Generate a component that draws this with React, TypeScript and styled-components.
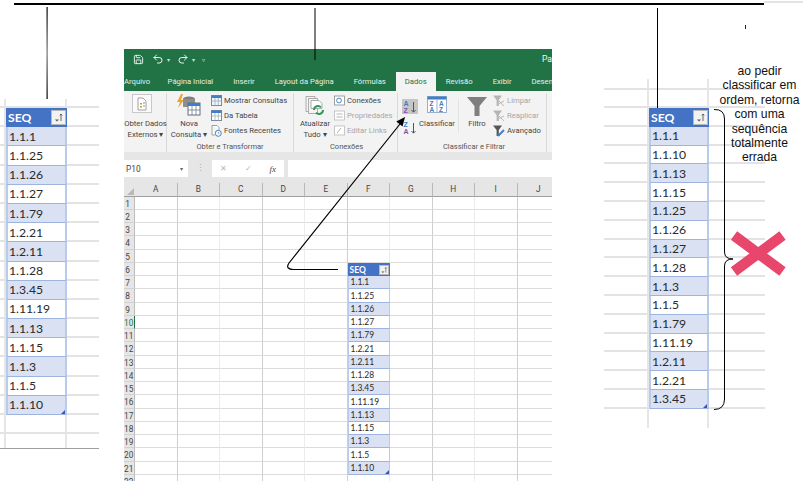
import React from 'react';
import styled, { createGlobalStyle } from 'styled-components';
import { Redo2, Save, Undo2 } from 'lucide-react';

const LEFT_ROWS = ['1.1.1', '1.1.25', '1.1.26', '1.1.27', '1.1.79', '1.2.21', '1.2.11', '1.1.28', '1.3.45', '1.11.19', '1.1.13', '1.1.15', '1.1.3', '1.1.5', '1.1.10'];
const RIGHT_ROWS = ['1.1.1', '1.1.10', '1.1.13', '1.1.15', '1.1.25', '1.1.26', '1.1.27', '1.1.28', '1.1.3', '1.1.5', '1.1.79', '1.11.19', '1.2.11', '1.2.21', '1.3.45'];
const COLUMNS = ['A', 'B', 'C', 'D', 'E', 'F', 'G', 'H', 'I', 'J'];
const TABS = ['Arquivo', 'Página Inicial', 'Inserir', 'Layout da Página', 'Fórmulas', 'Dados', 'Revisão', 'Exibir', 'Desen'];
const NOTE = ['ao pedir', 'classificar em', 'ordem, retorna', 'com uma', 'sequência', 'totalmente', 'errada'];

const FilterGlyph = ({ size = 11 }: { size?: number }) => (
    <svg width={size} height={size} viewBox="0 0 11 11">
        <path d="M2 7.5h4L4 9.5z" fill="#555" />
        <path d="M8 9V2M6.8 3.4 8 2l1.2 1.4" stroke="#555" strokeWidth="0.9" fill="none" />
    </svg>
);

const TableIcon = ({ fill = '#fff' }: { fill?: string }) => (
    <svg width="11" height="11" viewBox="0 0 11 11">
        <rect x="0.5" y="0.5" width="10" height="10" fill={fill} stroke="#7a8a9a" />
        <rect x="0.5" y="0.5" width="10" height="2.5" fill="#3f7fc4" />
        <path d="M4 3v7.5M7.3 3v7.5M.5 6h10" stroke="#9aa7b3" strokeWidth="0.7" />
    </svg>
);

const RecentIcon = () => (
    <svg width="11" height="12" viewBox="0 0 11 12">
        <path d="M1 .5h5l2 2V5M1 .5V10h3" fill="#fff" stroke="#8a8a8a" strokeWidth="0.8" />
        <circle cx="7.3" cy="8.3" r="3" fill="#fff" stroke="#3f7fc4" />
        <path d="M7.3 6.8v1.6h1.3" stroke="#3f7fc4" strokeWidth="0.7" fill="none" />
    </svg>
);

const ExternalDataIcon = () => (
    <svg width="20" height="19" viewBox="0 0 20 19">
        <rect x="0.5" y="0.5" width="19" height="18" fill="#fafafa" stroke="#c8c8c8" />
        <path d="M6 4h5l3 3v9H6z" fill="#fff" stroke="#8a8a8a" strokeWidth="0.8" />
        <path d="M8 9h2v1.5H8zM8 12h2v1.5H8z" fill="#c9a04a" />
        <path d="M11 9h2M11 12h2" stroke="#999" />
    </svg>
);

const NewQueryIcon = () => (
    <svg width="24" height="22" viewBox="0 0 24 22">
        <path d="M4 0 0 8h3l-2 6 6-8H4l2-6z" fill="#e8a33a" />
        <ellipse cx="12" cy="5" rx="6" ry="2.4" fill="#7d7d7d" />
        <path d="M6 5v8h12V5" fill="#8f8f8f" />
        <rect x="11" y="9" width="12" height="12" fill="#fff" stroke="#5f6f7f" />
        <rect x="11" y="9" width="12" height="3" fill="#3f7fc4" />
        <path d="M15 12v9M19 12v9M11 16h12" stroke="#5f6f7f" strokeWidth="0.7" />
    </svg>
);

const RefreshIcon = () => (
    <svg width="20" height="20" viewBox="0 0 20 20">
        <path d="M1 .5h9v15H1z" fill="#f4f4f4" stroke="#9a9a9a" strokeWidth="0.8" />
        <path d="M3.5 2.5h9v15h-9z" fill="#f4f4f4" stroke="#9a9a9a" strokeWidth="0.8" />
        <path d="M6 4.5h8l3 3v5H6z" fill="#fff" stroke="#9a9a9a" strokeWidth="0.8" />
        <path d="M9 14a4 4 0 0 1 7-2.6M18 14a4 4 0 0 1-7 2.6" stroke="#2f9a5c" strokeWidth="2" fill="none" />
    </svg>
);

const LinkIcon = ({ kind, muted }: { kind: string; muted?: boolean }) => {
    const ink = muted ? '#b5b5b5' : '#4a86c5';
    return (
        <svg width="11" height="11" viewBox="0 0 11 11">
            <rect x="0.5" y="1" width="10" height="9" fill="#fff" stroke={muted ? '#bbb' : '#8a8a8a'} strokeWidth="0.8" />
            {kind === 'link' && <circle cx="5" cy="5.5" r="2.4" fill="none" stroke={ink} />}
            {kind === 'props' && <path d="M2.5 4h6M2.5 7h6" stroke={ink} />}
            {kind === 'edit' && <path d="M3 8l4-5" stroke={ink} />}
        </svg>
    );
};

const SortIcon = ({ first, second }: { first: string; second: string }) => (
    <svg width="14" height="14" viewBox="0 0 14 14">
        <text x="0.5" y="6.3" fontFamily="Liberation Sans, sans-serif" fontSize="7" fontWeight="700" fill="#3f7fc4">{first}</text>
        <text x="0.5" y="13.3" fontFamily="Liberation Sans, sans-serif" fontSize="7" fontWeight="700" fill="#8a4fb0">{second}</text>
        <path d="M10.5 2v10M8.5 10l2 2.2 2-2.2" stroke="#555" fill="none" />
    </svg>
);

const CustomSortIcon = () => (
    <svg width="20" height="17" viewBox="0 0 20 17">
        <rect x="0.5" y="0.5" width="19" height="16" fill="#fff" stroke="#9ab0c8" />
        <rect x="0.5" y="0.5" width="19" height="3" fill="#3f7fc4" />
        <path d="M10 3.5v13" stroke="#9ab0c8" />
        <text x="2.5" y="10" fontFamily="Liberation Sans, sans-serif" fontSize="6.5" fontWeight="700" fill="#8a4fb0">Z</text>
        <text x="2.5" y="16" fontFamily="Liberation Sans, sans-serif" fontSize="6.5" fontWeight="700" fill="#3f7fc4">A</text>
        <text x="12" y="10" fontFamily="Liberation Sans, sans-serif" fontSize="6.5" fontWeight="700" fill="#3f7fc4">A</text>
        <text x="12" y="16" fontFamily="Liberation Sans, sans-serif" fontSize="6.5" fontWeight="700" fill="#8a4fb0">Z</text>
    </svg>
);

const FunnelIcon = () => (
    <svg width="20" height="19" viewBox="0 0 20 19">
        <path d="M0 0h20l-7.5 9v10h-5V9z" fill="#7f7f7f" />
    </svg>
);

const SmallFunnel = ({ color, badge }: { color: string; badge: string }) => (
    <svg width="12" height="12" viewBox="0 0 12 12">
        <path d="M0 .5h9L5.8 5v6H3.6V5z" fill={color} />
        <path d="M6 8.5 11 6M6 6l5 5" stroke={badge} strokeWidth="1" />
    </svg>
);

const AdvancedFunnel = () => (
    <svg width="12" height="12" viewBox="0 0 12 12">
        <path d="M0 .5h9L5.8 5v6H3.6V5z" fill="#555" />
        <path d="M5 11l6-6" stroke="#3f7fc4" strokeWidth="2" />
    </svg>
);

const Annotations = () => (
    <Overlay width="803" height="481" viewBox="0 0 803 481">
        <defs>
            <linearGradient id="fade" x1="0" y1="0" x2="0" y2="1">
                <stop offset="0" stopColor="#000" />
                <stop offset="0.5" stopColor="#777" />
                <stop offset="1" stopColor="#000" />
            </linearGradient>
        </defs>
        <line x1="14" y1="4" x2="764" y2="4" stroke="#000" strokeWidth="2" />
        <line x1="764" y1="2" x2="803" y2="2" stroke="#e4e4e4" strokeWidth="2" />
        <rect x="46.5" y="7" width="1.2" height="92" fill="url(#fade)" />
        <line x1="315" y1="8" x2="315" y2="60" stroke="#000" strokeWidth="1" />
        <line x1="657.5" y1="8" x2="657.5" y2="108" stroke="#000" strokeWidth="1" />
        <line x1="745.5" y1="25" x2="745.5" y2="29" stroke="#222" strokeWidth="1" />
        <path d="M338 269.5H293Q285 269 289 263L400 124" fill="none" stroke="#000" strokeWidth="1.2" />
        <polygon points="405,117 402.5,126.5 396.3,121.5" fill="#000" />
        <path d="M714 109.5Q724.5 109 724.5 119V252Q724.5 259 733 259Q724.5 259 724.5 266V399Q724.5 409.5 714 409.5" fill="none" stroke="#000" strokeWidth="1" />
        <path d="M734 235.5 782.5 271.5M782.5 235.5 734 271.5" stroke="#e8466b" strokeWidth="10.5" />
    </Overlay>
);

type SeqSheetProps = {
    rows: string[];
    columns: string;
    template: string;
    before: number;
    after: number;
    closed?: boolean;
    left: number;
    top: number;
};

const SeqSheet: React.FC<SeqSheetProps> = ({ rows, columns, template, before, after, closed, left, top }) => {
    const blank = (key: string, bare: boolean) => (
        <React.Fragment key={key}>
            <GridCell $bare={bare} />
            <GridCell $bare={bare} />
            <GridCell $bare={bare} />
        </React.Fragment>
    );
    return (
        <SheetClip $left={left} $top={top} $columns={columns} $template={template} $closed={closed}>
            {Array.from({ length: before }, (_, i) => blank(`b${i}`, false))}
            <GridCell />
            <HeadCell $size={12.2}>SEQ<FilterButton $size={15}><FilterGlyph /></FilterButton></HeadCell>
            <GridCell />
            {rows.map((value, i) => (
                <React.Fragment key={value}>
                    <GridCell />
                    <DataCell $band={i % 2 === 0} $size={12.2} $edge={2}>
                        {value}
                        {i === rows.length - 1 && <ResizeHandle />}
                    </DataCell>
                    <GridCell />
                </React.Fragment>
            ))}
            {Array.from({ length: after }, (_, i) => blank(`a${i}`, !closed || i === after - 1))}
        </SheetClip>
    );
};

const App: React.FC = () => {
    return (
        <Canvas>
            <GlobalStyle />
            <SeqSheet
                rows={LEFT_ROWS}
                columns="6px 61px 32px"
                template="9px repeat(16, 19.19px) 19px 14px"
                before={1}
                after={2}
                closed
                left={0}
                top={99}
            />
            <ExcelWindow>
                <TitleBar>
                    <SaveSlot><Save size={11} strokeWidth={2} /></SaveSlot>
                    <Undo2 size={12} strokeWidth={2} />
                    <Caret>▾</Caret>
                    <Redo2 size={12} strokeWidth={2} />
                    <Caret>▾</Caret>
                    <Caret>▿</Caret>
                    <TitleText>Pa</TitleText>
                </TitleBar>
                <TabStrip>
                    {TABS.map((tab) => (
                        <Tab key={tab} $active={tab === 'Dados'}>{tab}</Tab>
                    ))}
                </TabStrip>
                <Ribbon>
                    <Group $width={43} $pad={0}>
                        <GroupBody>
                            <LargeButton $width={43}>
                                <IconSlot $lift={3} $shift={-8}><ExternalDataIcon /></IconSlot>
                                <span>Obter Dados</span>
                                <span>Externos ▾</span>
                            </LargeButton>
                        </GroupBody>
                        <GroupLabel />
                    </Group>
                    <Group $width={127} $pad={0}>
                        <GroupBody>
                            <LargeButton $width={44}>
                                <IconSlot><NewQueryIcon /></IconSlot>
                                <span>Nova</span>
                                <span>Consulta ▾</span>
                            </LargeButton>
                            <ActionList>
                                <Action><TableIcon fill="#eef4fa" />Mostrar Consultas</Action>
                                <Action><TableIcon />Da Tabela</Action>
                                <Action><RecentIcon />Fontes Recentes</Action>
                            </ActionList>
                        </GroupBody>
                        <GroupLabel>Obter e Transformar</GroupLabel>
                    </Group>
                    <Group $width={104} $pad={2}>
                        <GroupBody>
                            <LargeButton $width={38}>
                                <IconSlot><RefreshIcon /></IconSlot>
                                <span>Atualizar</span>
                                <span>Tudo ▾</span>
                            </LargeButton>
                            <ActionList>
                                <Action><LinkIcon kind="link" />Conexões</Action>
                                <Action $muted><LinkIcon kind="props" muted />Propriedades</Action>
                                <Action $muted><LinkIcon kind="edit" muted />Editar Links</Action>
                            </ActionList>
                        </GroupBody>
                        <GroupLabel>Conexões</GroupLabel>
                    </Group>
                    <Group $width={149} $pad={4}>
                        <GroupBody>
                            <SortColumn>
                                <SortButton $active><SortIcon first="A" second="Z" /></SortButton>
                                <SortButton><SortIcon first="Z" second="A" /></SortButton>
                            </SortColumn>
                            <LargeButton $width={38}>
                                <IconSlot $lift={3}><CustomSortIcon /></IconSlot>
                                <span>Classificar</span>
                            </LargeButton>
                            <FaintDivider />
                            <LargeButton $width={32}>
                                <IconSlot><FunnelIcon /></IconSlot>
                                <span>Filtro</span>
                            </LargeButton>
                            <ActionList>
                                <Action $muted><SmallFunnel color="#b5b5b5" badge="#c9b0a8" />Limpar</Action>
                                <Action $muted><SmallFunnel color="#b5b5b5" badge="#a9c4b4" />Reaplicar</Action>
                                <Action><AdvancedFunnel />Avançado</Action>
                            </ActionList>
                        </GroupBody>
                        <GroupLabel>Classificar e Filtrar</GroupLabel>
                    </Group>
                </Ribbon>
                <FormulaBar>
                    <NameBox>P10<Caret $dark>▾</Caret></NameBox>
                    <Grip>⋮</Grip>
                    <FormulaButtons>
                        <span>✕</span>
                        <span>✓</span>
                        <FxLabel>fx</FxLabel>
                    </FormulaButtons>
                    <FormulaInput />
                </FormulaBar>
                <Sheet>
                    <Corner />
                    {COLUMNS.map((col) => (
                        <ColumnHead key={col}>{col}</ColumnHead>
                    ))}
                    {Array.from({ length: 22 }, (_, r) => (
                        <React.Fragment key={r}>
                            <RowHead $selected={r === 9}>{r + 1}</RowHead>
                            {COLUMNS.map((col, c) => {
                                if (col === 'F' && r === 5) {
                                    return <HeadCell key={col} $size={8.5}>SEQ<FilterButton $size={10}><FilterGlyph size={8} /></FilterButton></HeadCell>;
                                }
                                if (col === 'F' && r > 5 && r < 21) {
                                    return (
                                        <DataCell key={col} $band={r % 2 === 0} $size={8.5} $edge={1}>
                                            {LEFT_ROWS[r - 6]}
                                            {r === 20 && <ResizeHandle />}
                                        </DataCell>
                                    );
                                }
                                return <SheetCell key={col} $strong={c % 2 === 0} />;
                            })}
                        </React.Fragment>
                    ))}
                </Sheet>
            </ExcelWindow>
            <SeqSheet
                rows={RIGHT_ROWS}
                columns="45px 60px 56px"
                template="11px 18px repeat(16, 18.8px) 19px"
                before={2}
                after={1}
                left={604}
                top={79}
            />
            <Note>
                {NOTE.map((line) => (
                    <div key={line}>{line}</div>
                ))}
            </Note>
            <Annotations />
        </Canvas>
    );
};

export default App;

const GlobalStyle = createGlobalStyle`
    html, body {
        margin: 0;
        background: #fff;
        overflow: hidden;
    }
`;

const Canvas = styled.div`
    position: relative;
    width: 803px;
    height: 481px;
    overflow: hidden;
    background: #fff;
    font-family: Roboto, "Liberation Sans", sans-serif;
`;

const Overlay = styled.svg`
    position: absolute;
    top: 0;
    left: 0;
    pointer-events: none;
`;

const Note = styled.div`
    position: absolute;
    left: 716px;
    top: 64px;
    width: 87px;
    text-align: center;
    font-family: "Liberation Sans", Arial, sans-serif;
    font-size: 12.2px;
    line-height: 14.4px;
    color: #111;
`;

const SheetClip = styled.div<{ $left: number; $top: number; $columns: string; $template: string; $closed?: boolean }>`
    position: absolute;
    left: ${({ $left }) => $left}px;
    top: ${({ $top }) => $top}px;
    display: grid;
    grid-template-columns: ${({ $columns }) => $columns};
    grid-template-rows: ${({ $template }) => $template};
    font-family: Lato, "Liberation Sans", sans-serif;
    ${({ $closed }) => $closed && 'border-bottom: 1px solid #a0a0a0;'}
`;

const GridCell = styled.div<{ $bare?: boolean }>`
    box-sizing: border-box;
    border-bottom: ${({ $bare }) => ($bare ? 'none' : '2px solid #e3e3e3')};
    &:nth-child(3n + 1) {
        border-right: 2px solid #e6e6e6;
    }
    &:nth-child(3n + 2) {
        border-right: 2px solid #e6e6e6;
    }
`;

const HeadCell = styled.div<{ $size: number }>`
    box-sizing: border-box;
    display: flex;
    align-items: center;
    justify-content: space-between;
    padding: 0 1px 0 2px;
    background: #4472c4;
    color: #fff;
    font-family: Lato, "Liberation Sans", sans-serif;
    font-size: ${({ $size }) => $size}px;
    font-weight: 700;
    overflow: hidden;
`;

const FilterButton = styled.div<{ $size: number }>`
    box-sizing: border-box;
    display: flex;
    align-items: center;
    justify-content: center;
    width: ${({ $size }) => $size}px;
    height: ${({ $size }) => $size}px;
    background: #f2f2f2;
    border: 1px solid #b8b8b8;
`;

const DataCell = styled.div<{ $band: boolean; $size: number; $edge: number }>`
    box-sizing: border-box;
    position: relative;
    display: flex;
    align-items: center;
    padding-left: ${({ $edge }) => 3 - $edge}px;
    background: ${({ $band }) => ($band ? '#d9e1f2' : '#fff')};
    border-left: ${({ $edge }) => $edge}px solid #b8cbea;
    border-right: ${({ $edge }) => $edge}px solid #b8cbea;
    border-bottom: 1px solid #9db4e0;
    color: #2a2a2a;
    font-family: Lato, "Liberation Sans", sans-serif;
    font-size: ${({ $size }) => $size}px;
    white-space: nowrap;
`;

const ResizeHandle = styled.div`
    position: absolute;
    right: 0;
    bottom: 0;
    width: 0;
    height: 0;
    border-left: 4px solid transparent;
    border-bottom: 4px solid #3f51b5;
`;

const ExcelWindow = styled.div`
    position: absolute;
    left: 124px;
    top: 49px;
    width: 428px;
    height: 432px;
    display: flex;
    flex-direction: column;
    overflow: hidden;
    background: #fff;
`;

const TitleBar = styled.div`
    box-sizing: border-box;
    display: flex;
    align-items: center;
    gap: 3px;
    height: 23px;
    padding: 0 0 3px 9px;
    background: #217346;
    color: #f2f6f3;
    flex-shrink: 0;
`;

const SaveSlot = styled.div`
    display: flex;
    margin-right: 5px;
`;

const Caret = styled.span<{ $dark?: boolean }>`
    font-size: 6px;
    color: ${({ $dark }) => ($dark ? '#666' : '#cfe0d5')};
    margin-right: 4px;
`;

const TitleText = styled.span`
    margin-left: auto;
    font-size: 8.5px;
`;

const TabStrip = styled.div`
    display: flex;
    align-items: flex-end;
    height: 19px;
    background: #217346;
    flex-shrink: 0;
    white-space: nowrap;
`;

const Tab = styled.div<{ $active: boolean }>`
    display: flex;
    align-items: center;
    justify-content: center;
    height: 19px;
    padding: 0 ${({ $active }) => ($active ? 9 : 10)}px;
    font-size: 7.7px;
    background: ${({ $active }) => ($active ? '#f3f3f3' : 'transparent')};
    color: ${({ $active }) => ($active ? '#217346' : '#e6efe9')};
    flex-shrink: 0;
    &:first-child {
        padding: 0 7.5px 0 0;
    }
`;

const Ribbon = styled.div`
    display: flex;
    height: 61px;
    background: #f3f3f3;
    flex-shrink: 0;
`;

const Group = styled.div<{ $width: number; $pad: number }>`
    box-sizing: border-box;
    display: flex;
    flex-direction: column;
    width: ${({ $width }) => $width}px;
    padding-left: ${({ $pad }) => $pad}px;
    border-right: 1px solid #d8d8d8;
    margin-top: 2px;
    flex-shrink: 0;
`;

const GroupBody = styled.div`
    flex: 1;
    display: flex;
    align-items: flex-start;
    min-height: 0;
`;

const GroupLabel = styled.div`
    height: 11px;
    line-height: 11px;
    text-align: center;
    font-size: 7.5px;
    color: #555;
    white-space: nowrap;
`;

const LargeButton = styled.div<{ $width: number }>`
    display: flex;
    flex-direction: column;
    align-items: center;
    width: ${({ $width }) => $width}px;
    font-size: 7.7px;
    line-height: 10.5px;
    color: #444;
    white-space: nowrap;
    flex-shrink: 0;
`;

const IconSlot = styled.div<{ $lift?: number; $shift?: number }>`
    box-sizing: border-box;
    display: flex;
    align-items: flex-end;
    justify-content: center;
    height: 23px;
    margin-bottom: 3px;
    padding-bottom: ${({ $lift }) => $lift ?? 0}px;
    margin-left: ${({ $shift }) => $shift ?? 0}px;
`;

const ActionList = styled.div`
    display: flex;
    flex-direction: column;
    gap: 4px;
    padding-top: 2px;
`;

const Action = styled.div<{ $muted?: boolean }>`
    display: flex;
    align-items: center;
    gap: 2px;
    height: 11px;
    font-size: 7.7px;
    color: ${({ $muted }) => ($muted ? '#a6a6a6' : '#444')};
    white-space: nowrap;
`;

const SortColumn = styled.div`
    display: flex;
    flex-direction: column;
    gap: 6px;
    padding-top: 6px;
`;

const SortButton = styled.div<{ $active?: boolean }>`
    display: flex;
    align-items: center;
    justify-content: center;
    width: 16px;
    height: 15px;
    background: ${({ $active }) => ($active ? '#c6c6c6' : 'transparent')};
`;

const FaintDivider = styled.div`
    width: 1px;
    height: 34px;
    margin: 6px 2px 0;
    background: #e2e2e2;
`;

const FormulaBar = styled.div`
    display: flex;
    align-items: flex-start;
    gap: 4px;
    height: 31px;
    padding-top: 8px;
    box-sizing: border-box;
    background: #e6e6e6;
    flex-shrink: 0;
`;

const NameBox = styled.div`
    box-sizing: border-box;
    display: flex;
    align-items: center;
    justify-content: space-between;
    width: 64px;
    height: 17px;
    padding: 0 1px 0 2px;
    background: #fff;
    font-size: 8.3px;
    color: #444;
`;

const Grip = styled.div`
    width: 17px;
    text-align: center;
    line-height: 17px;
    font-size: 9px;
    color: #aaa;
`;

const FormulaButtons = styled.div`
    box-sizing: border-box;
    display: flex;
    align-items: center;
    justify-content: space-between;
    width: 72px;
    height: 17px;
    padding: 0 8px;
    background: #fff;
    font-size: 8px;
    color: #b8b8b8;
    margin-left: -1px;
`;

const FxLabel = styled.span`
    font-family: "Liberation Serif", serif;
    font-style: italic;
    font-size: 9px;
    color: #444;
`;

const FormulaInput = styled.div`
    flex: 1;
    height: 17px;
    background: #fff;
`;

const Sheet = styled.div`
    display: grid;
    grid-template-columns: 11px repeat(10, 42.5px);
    grid-template-rows: 13.7px;
    grid-auto-rows: 13.25px;
`;

const Corner = styled.div`
    background: #e6e6e6;
    border-bottom: 1px solid #9f9f9f;
    box-sizing: border-box;
    position: relative;
    &::after {
        content: '';
        position: absolute;
        right: 1px;
        bottom: 1px;
        border-left: 7px solid transparent;
        border-bottom: 7px solid #b9b9b9;
    }
`;

const ColumnHead = styled.div`
    box-sizing: border-box;
    display: flex;
    align-items: center;
    justify-content: center;
    background: #e6e6e6;
    border-right: 1px solid #b8b8b8;
    border-bottom: 1px solid #9f9f9f;
    font-size: 8.3px;
    color: #444;
`;

const RowHead = styled.div<{ $selected: boolean }>`
    box-sizing: border-box;
    background: #e6e6e6;
    padding-right: 4px;
    text-align: right;
    line-height: 14px;
    font-size: 8.3px;
    white-space: nowrap;
    overflow: hidden;
    color: ${({ $selected }) => ($selected ? '#217346' : '#444')};
    border-right: 1px solid ${({ $selected }) => ($selected ? '#217346' : '#bdbdbd')};
    border-bottom: 1px solid #d2d2d2;
`;

const SheetCell = styled.div<{ $strong: boolean }>`
    box-sizing: border-box;
    border-right: 1px solid ${({ $strong }) => ($strong ? '#cfcfcf' : '#ececec')};
    border-bottom: 1px solid #dcdcdc;
`;
